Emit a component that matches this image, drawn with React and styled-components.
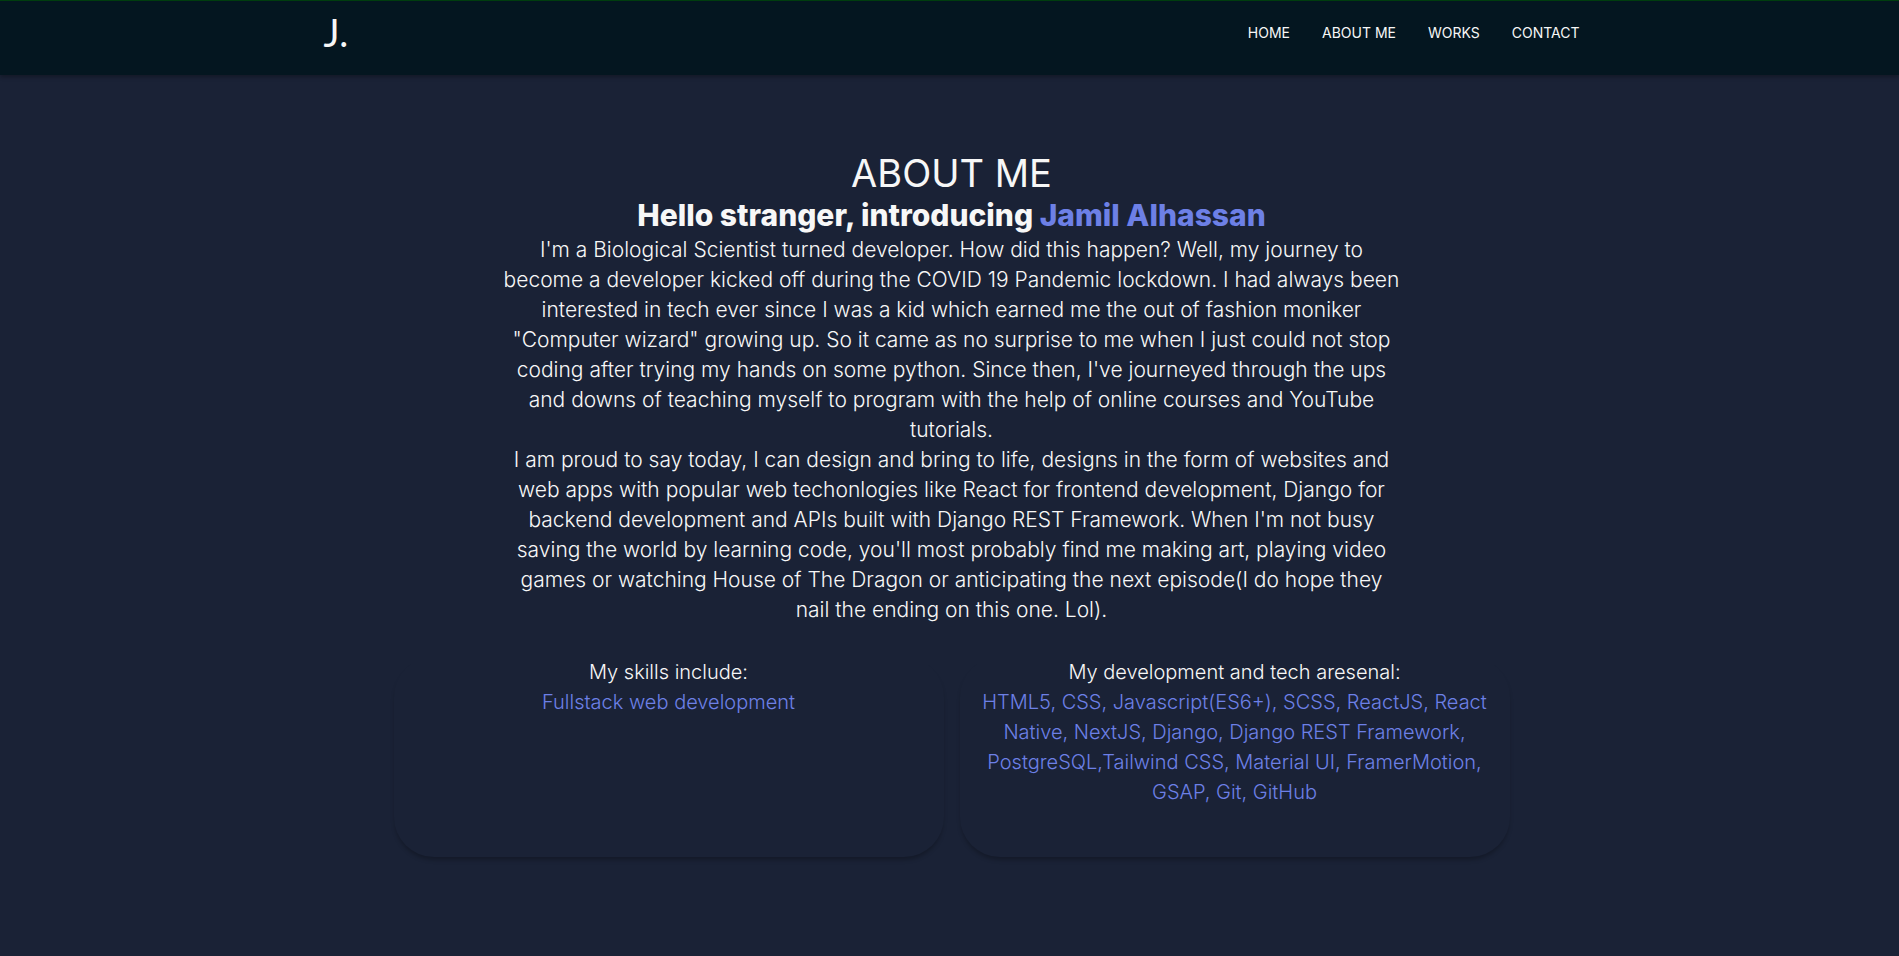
import React, { Fragment } from "react";
import styled, { createGlobalStyle } from "styled-components";

const GlobalStyle = createGlobalStyle`
  * {
    box-sizing: border-box;
    margin: 0;
    padding: 0;
  }
  body {
    min-height: 100vh;
    background: #1a2236;
    color: #f7f7f7;
    font-family: Inter, "Open Sans", sans-serif;
    font-weight: 300;
  }
`;

const Header = styled.header`
  padding: 8px 16px 20px 20px;
  border-top: 1px solid #003d0e;
  background: #041620;
  box-shadow: 0 2px 4px rgba(0, 0, 0, 0.3);
`;

const NavBar = styled.nav`
  display: flex;
  align-items: center;
  justify-content: space-between;
  max-width: 1256px;
  margin: 0 auto;
`;

const Logo = styled.a`
  color: inherit;
  font-family: Lato, sans-serif;
  font-size: 38px;
  font-weight: 400;
  line-height: 46px;
  text-decoration: none;
`;

const Menu = styled.ul`
  display: flex;
  gap: 32px;
  list-style: none;
`;

const MenuLink = styled.a`
  color: inherit;
  font-size: 14px;
  font-weight: 400;
  text-decoration: none;
  text-transform: uppercase;
`;

const About = styled.main`
  display: flex;
  flex-direction: column;
  align-items: center;
  padding: 76px 16px 64px 20px;
  text-align: center;
`;

const Title = styled.h1`
  font-size: 38px;
  font-weight: 400;
  line-height: 44px;
  text-transform: uppercase;
`;

const Greeting = styled.h2`
  font-size: 30px;
  font-weight: 800;
  line-height: 40px;
`;

const Accent = styled.span`
  color: #6d80e6;
`;

const Story = styled.p`
  max-width: 912px;
  font-size: 21px;
  line-height: 30px;
`;

const Cards = styled.section`
  display: grid;
  grid-template-columns: repeat(2, minmax(0, 1fr));
  gap: 16px;
  width: 100%;
  max-width: 1116px;
  margin-top: 32px;
`;

const Card = styled.article`
  min-height: 200px;
  padding: 0 20px 48px;
  border-radius: 40px;
  box-shadow: 0 4px 4px -1px rgba(0, 0, 0, 0.25);
  font-size: 20px;
  line-height: 30px;
`;

const CardTitle = styled.h3`
  font-size: 20px;
  font-weight: 300;
`;

const CardText = styled.p`
  color: #6d80e6;
`;

const links = [
  ["Home", "#home"],
  ["About me", "#about"],
  ["Works", "#works"],
  ["Contact", "#contact"],
];

const journey = [
  "I'm a Biological Scientist turned developer. How did this happen? Well, my journey to",
  "become a developer kicked off during the COVID 19 Pandemic lockdown. I had always been",
  "interested in tech ever since I was a kid which earned me the out of fashion moniker",
  "\"Computer wizard\" growing up. So it came as no surprise to me when I just could not stop",
  "coding after trying my hands on some python. Since then, I've journeyed through the ups",
  "and downs of teaching myself to program with the help of online courses and YouTube",
  "tutorials.",
];

const today = [
  "I am proud to say today, I can design and bring to life, designs in the form of websites and",
  "web apps with popular web techonlogies like React for frontend development, Django for",
  "backend development and APIs built with Django REST Framework. When I'm not busy",
  "saving the world by learning code, you'll most probably find me making art, playing video",
  "games or watching House of The Dragon or anticipating the next episode(I do hope they",
  "nail the ending on this one. Lol).",
];

const arsenal = [
  "HTML5, CSS, Javascript(ES6+), SCSS, ReactJS, React",
  "Native, NextJS, Django, Django REST Framework,",
  "PostgreSQL,Tailwind CSS, Material UI, FramerMotion,",
  "GSAP, Git, GitHub",
];

const Lines = ({ of }) =>
  of.map((line, i) => (
    <Fragment key={line}>
      {i > 0 && <br />}
      {line}
    </Fragment>
  ));

export default function App() {
  return (
    <>
      <GlobalStyle />
      <Header>
        <NavBar>
          <Logo href="#home">J.</Logo>
          <Menu>
            {links.map(([label, href]) => (
              <li key={href}>
                <MenuLink href={href}>{label}</MenuLink>
              </li>
            ))}
          </Menu>
        </NavBar>
      </Header>
      <About id="about">
        <Title>About me</Title>
        <Greeting>
          Hello stranger, introducing <Accent>Jamil Alhassan</Accent>
        </Greeting>
        <Story>
          <Lines of={journey} />
        </Story>
        <Story>
          <Lines of={today} />
        </Story>
        <Cards>
          <Card>
            <CardTitle>My skills include:</CardTitle>
            <CardText>Fullstack web development</CardText>
          </Card>
          <Card>
            <CardTitle>My development and tech aresenal:</CardTitle>
            <CardText>
              <Lines of={arsenal} />
            </CardText>
          </Card>
        </Cards>
      </About>
    </>
  );
}
